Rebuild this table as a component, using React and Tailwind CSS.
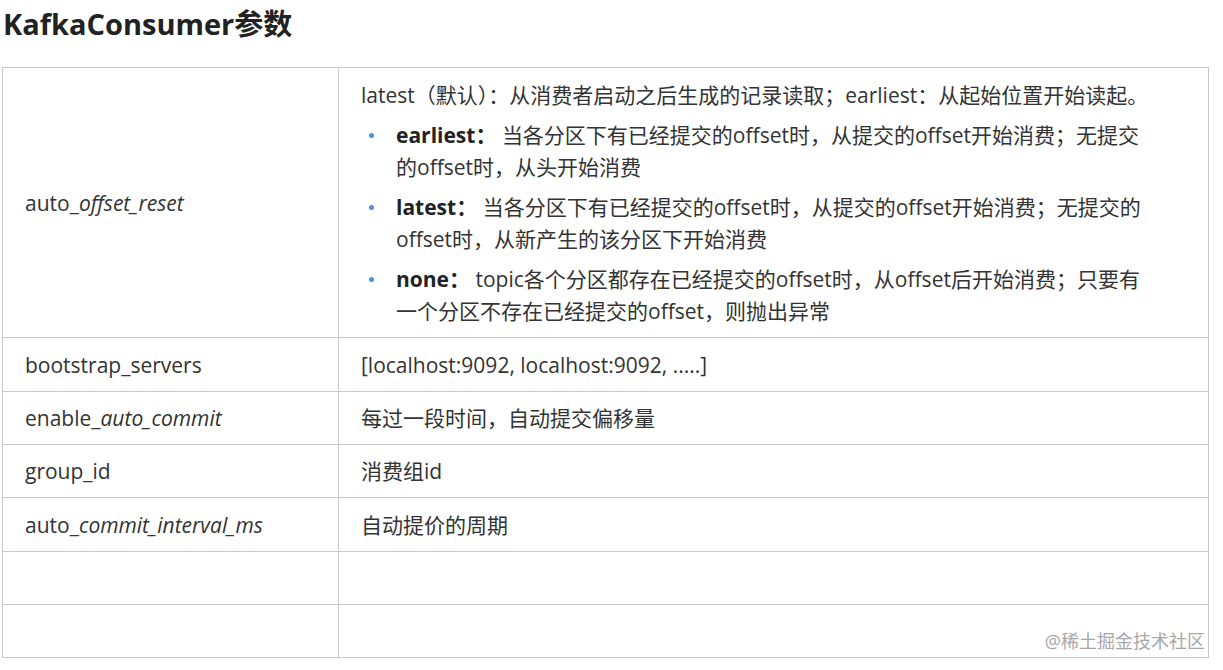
const font = { fontFamily: '"Open Sans", "Noto Sans CJK SC", sans-serif' };

const rows = [
  { key: 'bootstrap_servers', value: '[localhost:9092, localhost:9092, .....]', tall: true },
  { key: ['enable', 'auto_commit'], value: '每过一段时间，自动提交偏移量' },
  { key: 'group_id', value: '消费组id' },
  { key: ['auto', 'commit_interval_ms'], value: '自动提价的周期', tall: true },
  { key: '', value: '' },
  { key: '', value: '' },
];

const Key = ({ k }) =>
  Array.isArray(k) ? (
    <>
      {k[0]}_<em className="italic">{k[1]}</em>
    </>
  ) : (
    k
  );

const Bullet = ({ label, children }) => (
  <li className="relative mt-2 whitespace-nowrap pl-[35px]">
    <span className="absolute left-[8px] top-[14px] h-[5px] w-[5px] rounded-full bg-[#4a8fe0]" />
    <b className="font-bold text-[#222]">{label}</b>
    {children}
  </li>
);

export default function App() {
  return (
    <div className="min-h-screen bg-white pl-[2px] text-[#333]" style={font}>
      <h1 className="mb-[19px] pl-[1px] text-[29px] font-bold leading-[48px] text-[#222]">
        KafkaConsumer参数
      </h1>
      <div className="relative w-[1207px]">
        <table className="w-full border-collapse text-[21px] leading-[32px]">
          <tbody>
            <tr>
              <td className="w-[336px] border border-[#c8c8c8] px-[22px] align-middle">
                auto_<em className="italic">offset_reset</em>
              </td>
              <td className="border border-[#c8c8c8] pb-[10px] pl-[22px] pr-[8px] pt-[11px]">
                <p className="whitespace-nowrap">
                  latest（默认）：从消费者启动之后生成的记录读取；earliest：从起始位置开始读起。
                </p>
                <ul>
                  <Bullet label="earliest：">
                    {' '}当各分区下有已经提交的offset时，从提交的offset开始消费；无提交
                    <br />
                    的offset时，从头开始消费
                  </Bullet>
                  <Bullet label="latest：">
                    {' '}当各分区下有已经提交的offset时，从提交的offset开始消费；无提交的
                    <br />
                    offset时，从新产生的该分区下开始消费
                  </Bullet>
                  <Bullet label="none：">
                    {' '}topic各个分区都存在已经提交的offset时，从offset后开始消费；只要有
                    <br />
                    一个分区不存在已经提交的offset，则抛出异常
                  </Bullet>
                </ul>
              </td>
            </tr>
            {rows.map((r, i) => (
              <tr key={i} className={r.tall ? 'h-[54px]' : 'h-[53px]'}>
                <td className="border border-[#c8c8c8] px-[22px] py-[10px]">
                  <Key k={r.key} />
                </td>
                <td className="border border-[#c8c8c8] px-[22px] py-[10px]">{r.value}</td>
              </tr>
            ))}
          </tbody>
        </table>
        <span className="absolute bottom-[6px] right-[4px] text-[18px] leading-[22px] text-[#a8a8a8]">
          @稀土掘金技术社区
        </span>
      </div>
    </div>
  );
}
